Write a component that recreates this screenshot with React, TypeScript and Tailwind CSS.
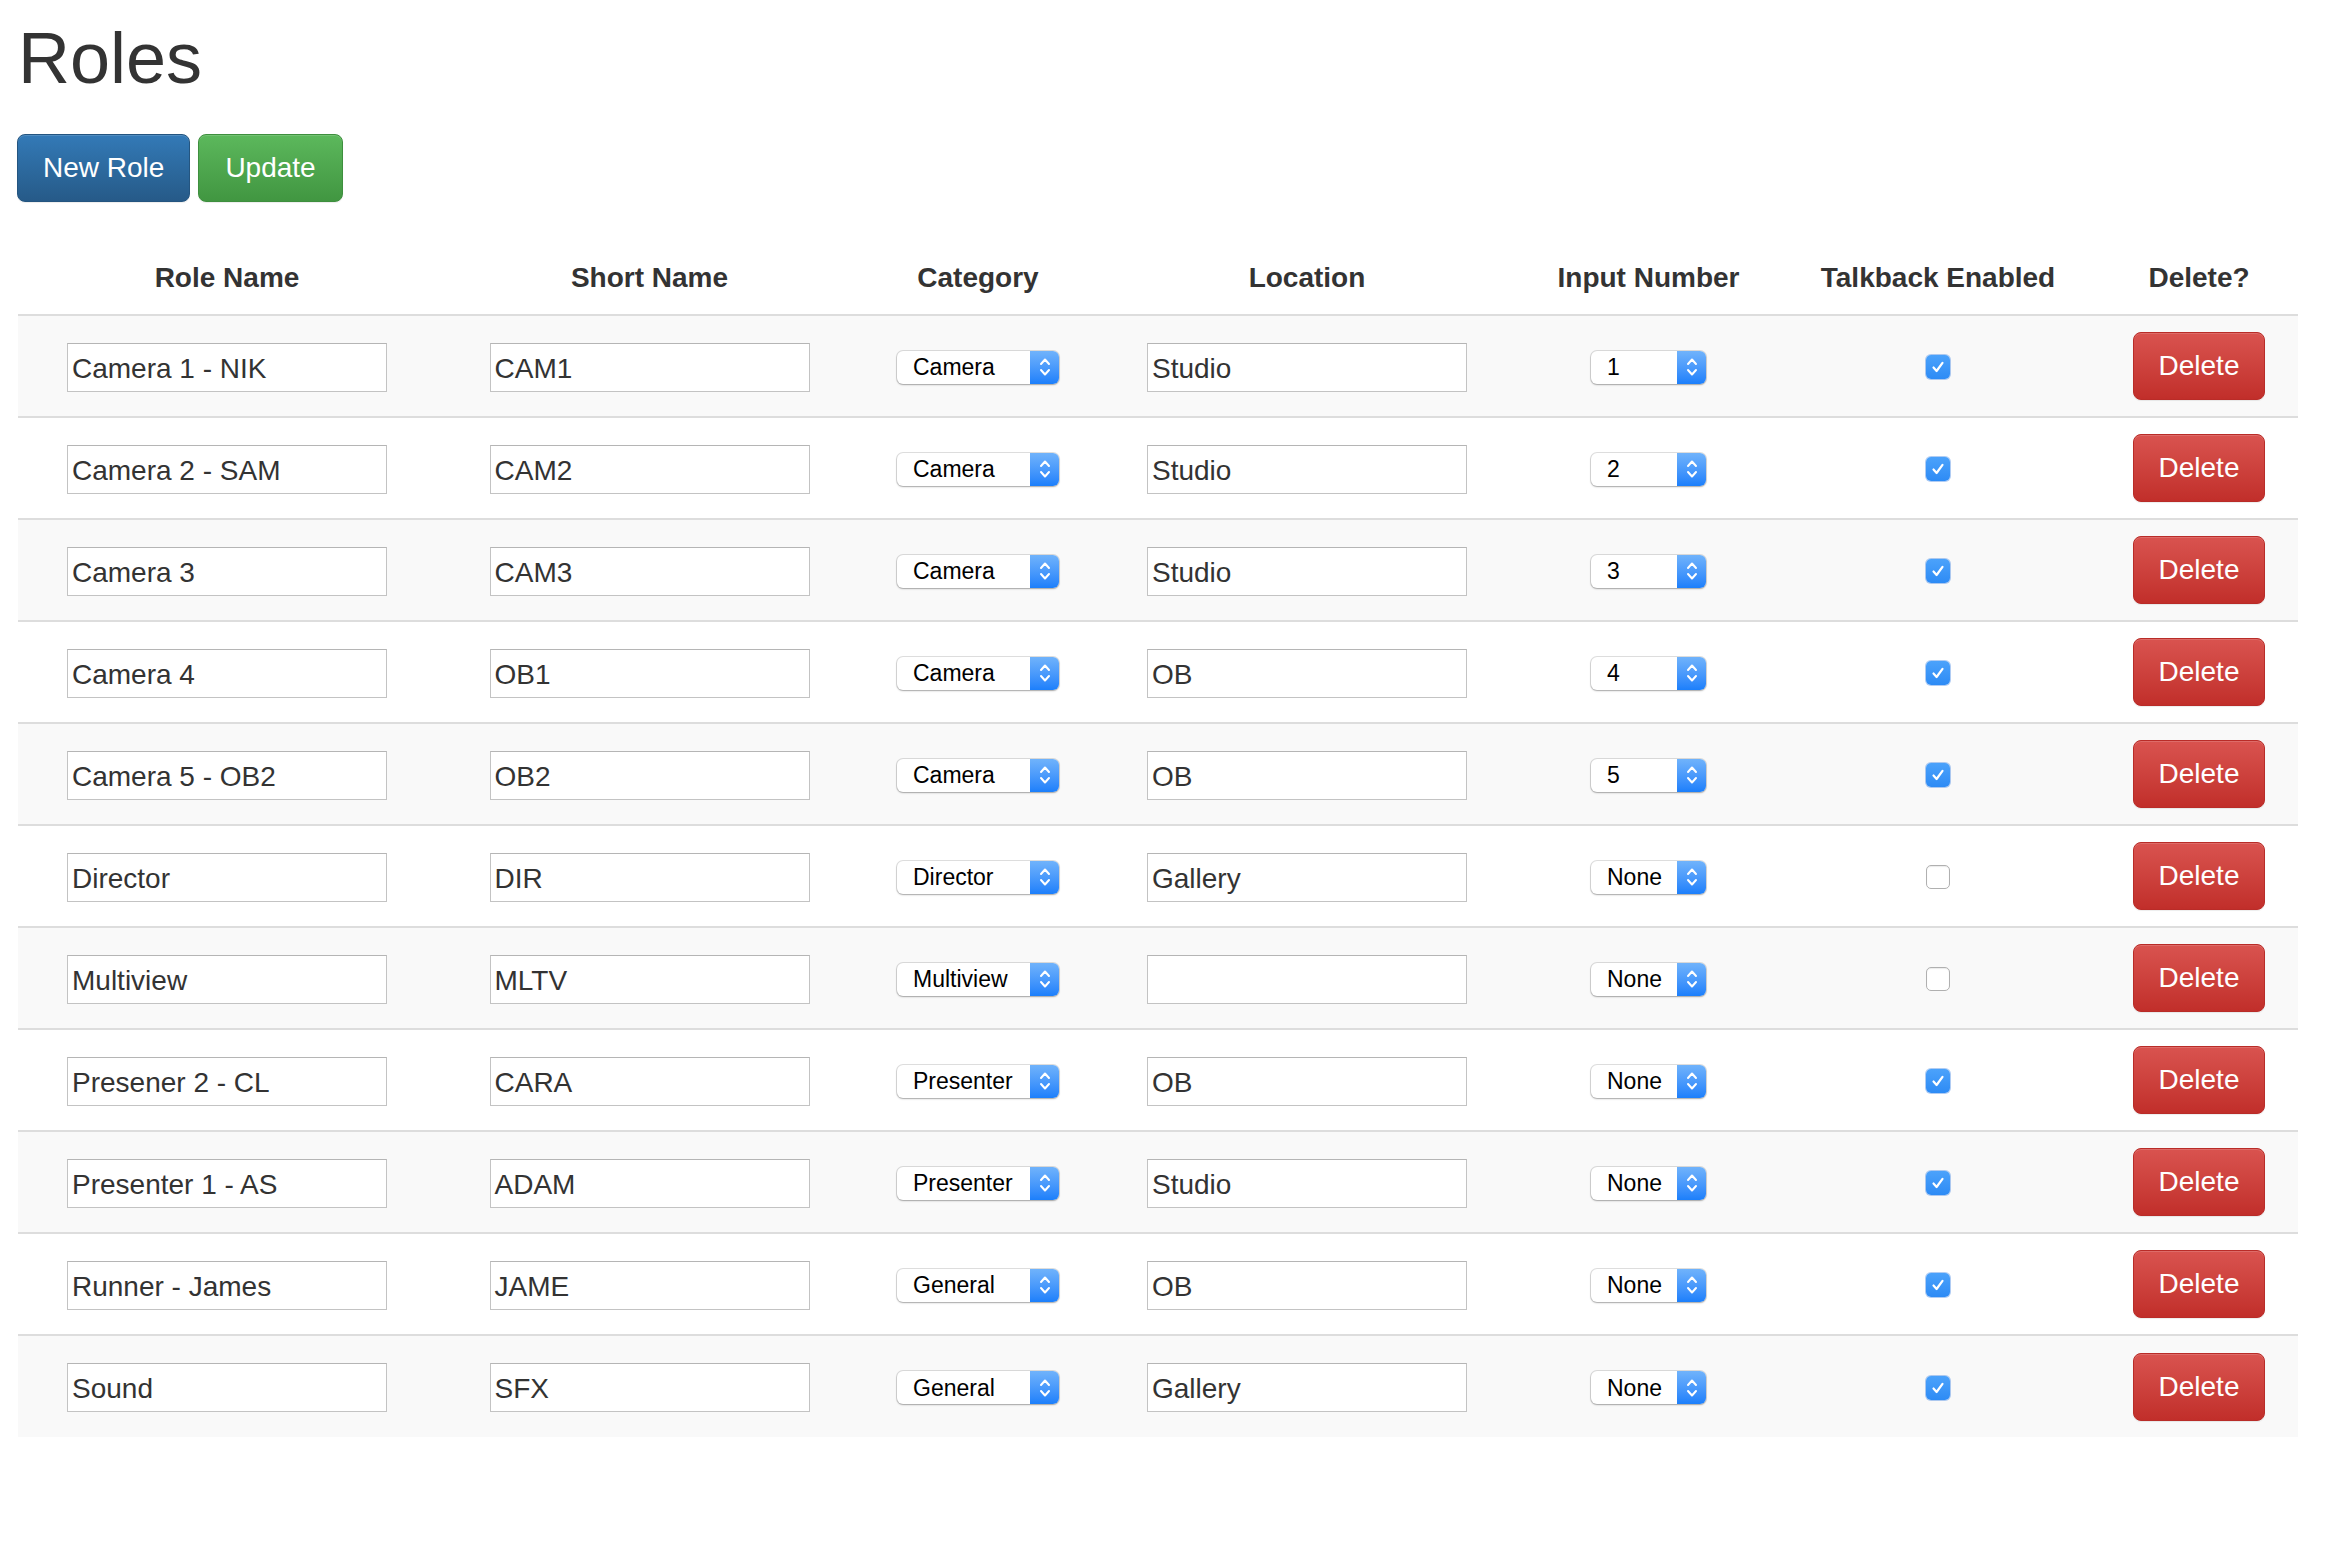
import React from "react";

type Row = {
  name: string;
  short: string;
  cat: string;
  loc: string;
  num: string;
  talk: boolean;
};

const rows: Row[] = [
  { name: "Camera 1 - NIK", short: "CAM1", cat: "Camera", loc: "Studio", num: "1", talk: true },
  { name: "Camera 2 - SAM", short: "CAM2", cat: "Camera", loc: "Studio", num: "2", talk: true },
  { name: "Camera 3", short: "CAM3", cat: "Camera", loc: "Studio", num: "3", talk: true },
  { name: "Camera 4", short: "OB1", cat: "Camera", loc: "OB", num: "4", talk: true },
  { name: "Camera 5 - OB2", short: "OB2", cat: "Camera", loc: "OB", num: "5", talk: true },
  { name: "Director", short: "DIR", cat: "Director", loc: "Gallery", num: "None", talk: false },
  { name: "Multiview", short: "MLTV", cat: "Multiview", loc: "", num: "None", talk: false },
  { name: "Presener 2 - CL", short: "CARA", cat: "Presenter", loc: "OB", num: "None", talk: true },
  { name: "Presenter 1 - AS", short: "ADAM", cat: "Presenter", loc: "Studio", num: "None", talk: true },
  { name: "Runner - James", short: "JAME", cat: "General", loc: "OB", num: "None", talk: true },
  { name: "Sound", short: "SFX", cat: "General", loc: "Gallery", num: "None", talk: true },
];

function TextBox({ value }: { value: string }) {
  return (
    <div className="mx-auto flex h-[49px] w-[320px] items-center border border-[#c3c3c3] border-t-[#b5b5b5] bg-white pl-[4px] pt-[3px] text-left text-[28px] leading-none text-[#333]">
      {value}
    </div>
  );
}

function Chevrons() {
  return (
    <svg width="12" height="22" viewBox="0 0 12 22" fill="none">
      <path d="M2 8 L6 3.5 L10 8" stroke="white" strokeWidth="2" strokeLinecap="round" strokeLinejoin="round" />
      <path d="M2 14 L6 18.5 L10 14" stroke="white" strokeWidth="2" strokeLinecap="round" strokeLinejoin="round" />
    </svg>
  );
}

function PopSelect({ value, width }: { value: string; width: string }) {
  return (
    <div
      className={`mx-auto flex h-[33px] ${width} items-stretch rounded-[6px] bg-white shadow-[0_0_0_1px_rgba(0,0,0,0.12),0_1px_2px_rgba(0,0,0,0.25)]`}
    >
      <div className="flex flex-1 items-center pl-[16px] pt-[1px] text-left text-[23px] leading-none text-black">
        {value}
      </div>
      <div className="flex w-[29px] items-center justify-center rounded-r-[6px] bg-linear-to-b from-[#70b3fb] to-[#1b7ffb]">
        <Chevrons />
      </div>
    </div>
  );
}

function Check({ on }: { on: boolean }) {
  if (on) {
    return (
      <div className="mx-auto flex h-[24px] w-[24px] items-center justify-center rounded-[5px] bg-linear-to-b from-[#4ba2fb] to-[#2d8bf5] shadow-[0_0_0_1px_rgba(30,110,220,0.35)]">
        <svg width="14" height="14" viewBox="0 0 14 14" fill="none">
          <path d="M2.5 7.5 L5.6 11 L11.5 2.8" stroke="white" strokeWidth="2.2" strokeLinecap="round" strokeLinejoin="round" />
        </svg>
      </div>
    );
  }
  return (
    <div className="mx-auto h-[24px] w-[24px] rounded-[5px] border border-[#b0b0b0] bg-white shadow-[inset_0_1px_1px_rgba(0,0,0,0.08)]" />
  );
}

export default function App() {
  return (
    <div
      className="min-h-[1544px] w-[2344px] bg-white pl-[18px] text-[#333]"
      style={{ fontFamily: '"Liberation Sans", Arial, Helvetica, sans-serif' }}
    >
      <h1 className="pt-[19px] text-[72px] font-normal leading-[79px] text-[#333]">Roles</h1>
      <div className="mt-[36px] flex gap-[8px]">
        <button className="ml-[-1px] h-[68px] rounded-[8px] border border-[#245580] bg-linear-to-b from-[#337ab7] to-[#265a88] px-[25px] text-[28px] leading-none text-white shadow-[inset_0_1px_0_rgba(255,255,255,0.15),0_1px_1px_rgba(0,0,0,0.075)]">
          New Role
        </button>
        <button className="h-[68px] rounded-[8px] border border-[#3e8f3e] bg-linear-to-b from-[#5cb85c] to-[#419641] px-[26px] text-[28px] leading-none text-white shadow-[inset_0_1px_0_rgba(255,255,255,0.15),0_1px_1px_rgba(0,0,0,0.075)]">
          Update
        </button>
      </div>
      <table className="mt-[40px] w-[2280px] table-fixed border-collapse">
        <colgroup>
          <col className="w-[418px]" />
          <col className="w-[427px]" />
          <col className="w-[230px]" />
          <col className="w-[428px]" />
          <col className="w-[255px]" />
          <col className="w-[324px]" />
          <col className="w-[198px]" />
        </colgroup>
        <thead>
          <tr className="h-[73px]">
            {["Role Name", "Short Name", "Category", "Location", "Input Number", "Talkback Enabled", "Delete?"].map(
              (h) => (
                <th key={h} className="text-center text-[28px] font-bold leading-[40px] text-[#333]">
                  {h}
                </th>
              )
            )}
          </tr>
        </thead>
        <tbody>
          {rows.map((r, i) => (
            <tr key={i} className={`border-t-2 border-[#dddddd] ${i % 2 === 0 ? "bg-[#f9f9f9]" : "bg-white"}`}>
              <td className="h-[102px] pt-[2px] text-center align-middle">
                <TextBox value={r.name} />
              </td>
              <td className="pt-[2px] text-center align-middle">
                <TextBox value={r.short} />
              </td>
              <td className="pt-[2px] text-center align-middle">
                <PopSelect value={r.cat} width="w-[162px]" />
              </td>
              <td className="pt-[2px] text-center align-middle">
                <TextBox value={r.loc} />
              </td>
              <td className="pt-[2px] text-center align-middle">
                <PopSelect value={r.num} width="w-[115px]" />
              </td>
              <td className="pt-[2px] text-center align-middle">
                <Check on={r.talk} />
              </td>
              <td className="text-center align-middle">
                <button className="mx-auto h-[68px] w-[132px] rounded-[8px] border border-[#b92c28] bg-linear-to-b from-[#d9534f] to-[#c12e2a] text-[28px] leading-none text-white shadow-[inset_0_1px_0_rgba(255,255,255,0.15),0_1px_1px_rgba(0,0,0,0.075)]">
                  Delete
                </button>
              </td>
            </tr>
          ))}
        </tbody>
      </table>
    </div>
  );
}
